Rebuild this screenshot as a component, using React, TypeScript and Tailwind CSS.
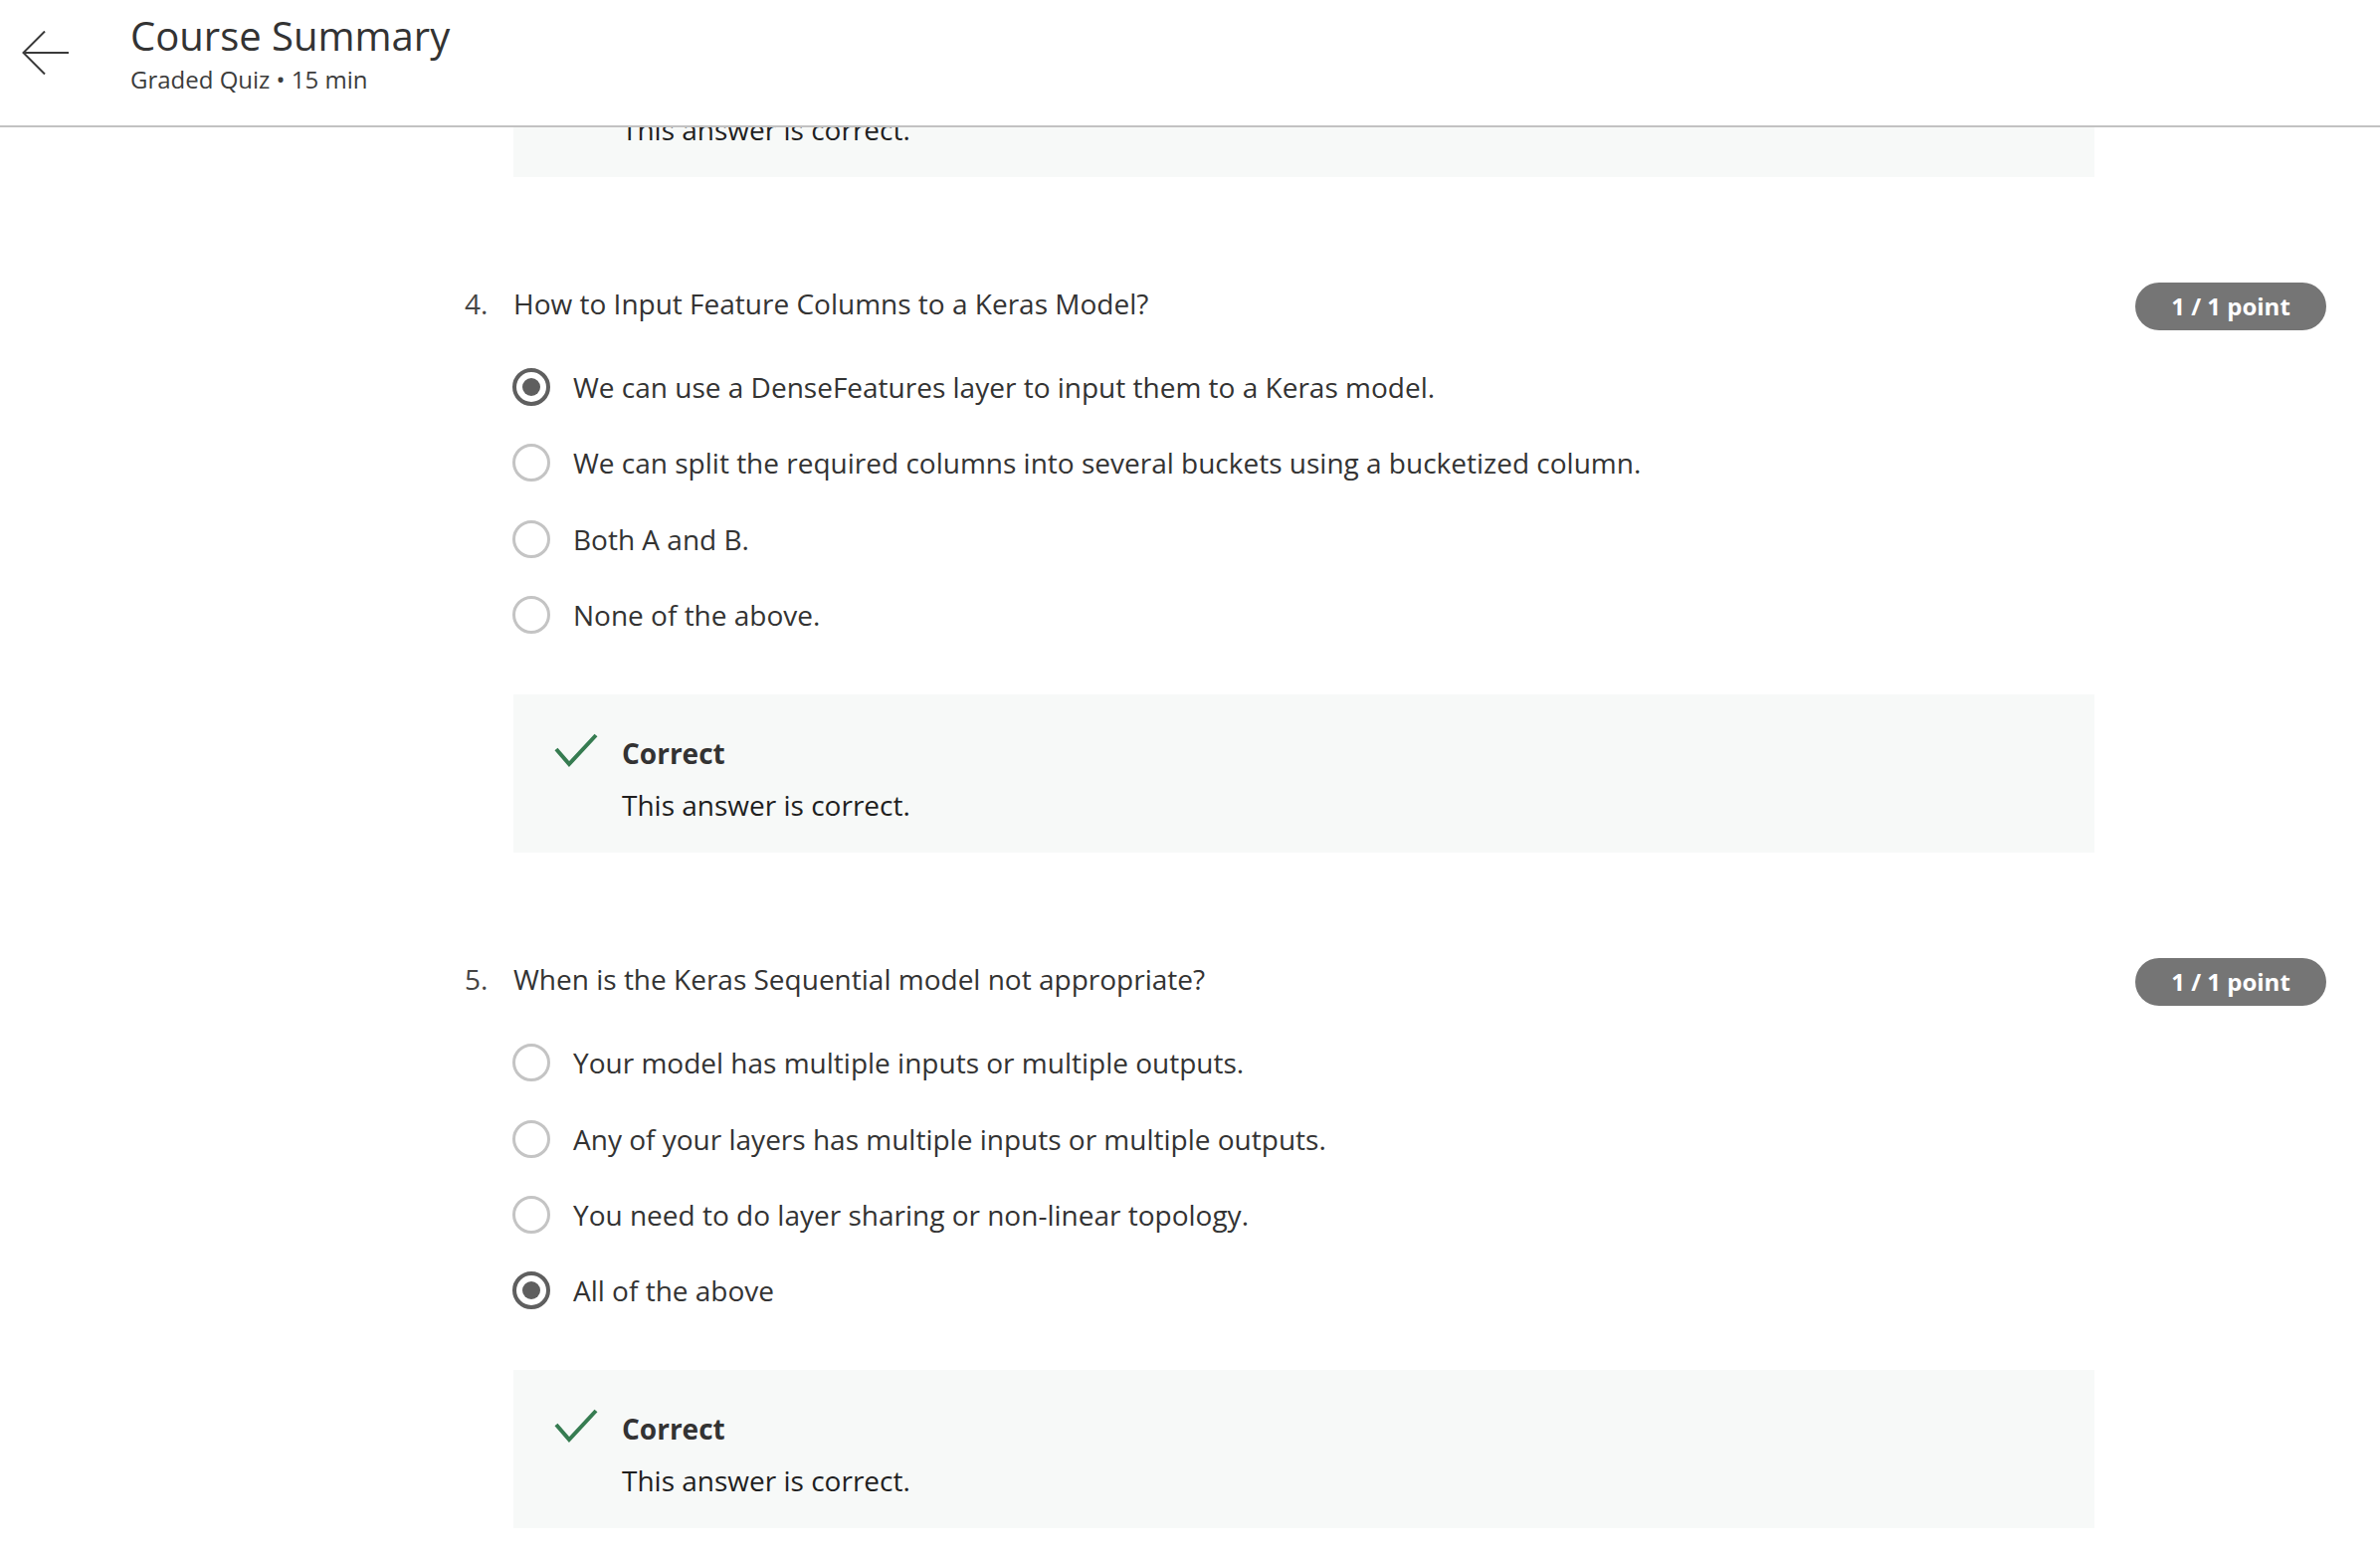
import React from "react";

const FONT = { fontFamily: '"Open Sans", "Noto Sans", sans-serif' };

function Radio({ checked }: { checked: boolean }) {
  return checked ? (
    <span className="flex h-[38px] w-[38px] shrink-0 items-center justify-center rounded-full border-[4px] border-[#5f5f5f]">
      <span className="h-[18px] w-[18px] rounded-full bg-[#5f5f5f]" />
    </span>
  ) : (
    <span className="h-[38px] w-[38px] shrink-0 rounded-full border-[3px] border-[#c4c4c4]" />
  );
}

function Check() {
  return (
    <svg width="44" height="36" viewBox="0 0 44 36" className="shrink-0">
      <path d="M2 17 L15 32 L42 3" fill="none" stroke="#367c51" strokeWidth="4" />
    </svg>
  );
}

function Feedback() {
  return (
    <div className="ml-[6px] h-[159px] w-[1589px] bg-[#f7f9f8] pl-[41px] pt-[38px]">
      <div className="flex gap-[24px]">
        <Check />
        <div className="text-[28px] leading-[42px]">
          <div className="font-bold text-[#333333]">Correct</div>
          <div className="mt-[10px] text-[#1f1f1f]">This answer is correct.</div>
        </div>
      </div>
    </div>
  );
}

type Q = { num: string; text: string; options: string[]; selected: number };

function Question({ q }: { q: Q }) {
  return (
    <section className="mt-[106px] flex">
      <div className="w-[43px] text-[28px] leading-[42px] text-[#444444]">{q.num}</div>
      <div className="w-[1596px]">
        <p className="h-[48px] pl-[6px] text-[28px] leading-[42px] text-[#333333]">{q.text}</p>
        <div className="mt-[19px] flex flex-col">
          {q.options.map((o, i) => (
            <label key={i} className="flex h-[76.3px] items-center gap-[23px] pl-[5px]">
              <Radio checked={i === q.selected} />
              <span className="text-[28px] leading-[42px] text-[#333333]">{o}</span>
            </label>
          ))}
        </div>
        <div className="mt-[42px]">
          <Feedback />
        </div>
      </div>
      <div className="ml-[40px]">
        <span className="flex h-[48px] w-[192px] items-center justify-center rounded-full bg-[#757575] text-[24px] font-bold leading-none text-white">
          1 / 1 point
        </span>
      </div>
    </section>
  );
}

const questions: Q[] = [
  {
    num: "4.",
    text: "How to Input Feature Columns to a Keras Model?",
    options: [
      "We can use a DenseFeatures layer to input them to a Keras model.",
      "We can split the required columns into several buckets using a bucketized column.",
      "Both A and B.",
      "None of the above.",
    ],
    selected: 0,
  },
  {
    num: "5.",
    text: "When is the Keras Sequential model not appropriate?",
    options: [
      "Your model has multiple inputs or multiple outputs.",
      "Any of your layers has multiple inputs or multiple outputs.",
      "You need to do layer sharing or non-linear topology.",
      "All of the above",
    ],
    selected: 3,
  },
];

export default function App() {
  return (
    <div className="relative h-[1558px] w-full overflow-hidden bg-white" style={FONT}>
      <header className="fixed inset-x-0 top-0 z-10 flex h-[128px] items-start border-b-2 border-[#c2c2c2] bg-white pl-[22px] pt-[12px]">
        <svg width="48" height="46" viewBox="0 0 48 46" className="mt-[19px] shrink-0">
          <path d="M47 22 H1.5 M23 0.5 L1.5 22 L23 43.5" fill="none" stroke="#3a3a3a" strokeWidth="2" />
        </svg>
        <div className="ml-[61px]">
          <h1 className="text-[40px] leading-[48px] text-[#333333]">Course Summary</h1>
          <div className="mt-[4px] text-[24px] leading-[32px] text-[#3c3c3c]">Graded Quiz • 15 min</div>
        </div>
      </header>
      <main className="pl-[510px] pt-[19px]">
        <Feedback />
      </main>
      <div className="pl-[467px]">
        {questions.map((q) => (
          <Question key={q.num} q={q} />
        ))}
      </div>
    </div>
  );
}
